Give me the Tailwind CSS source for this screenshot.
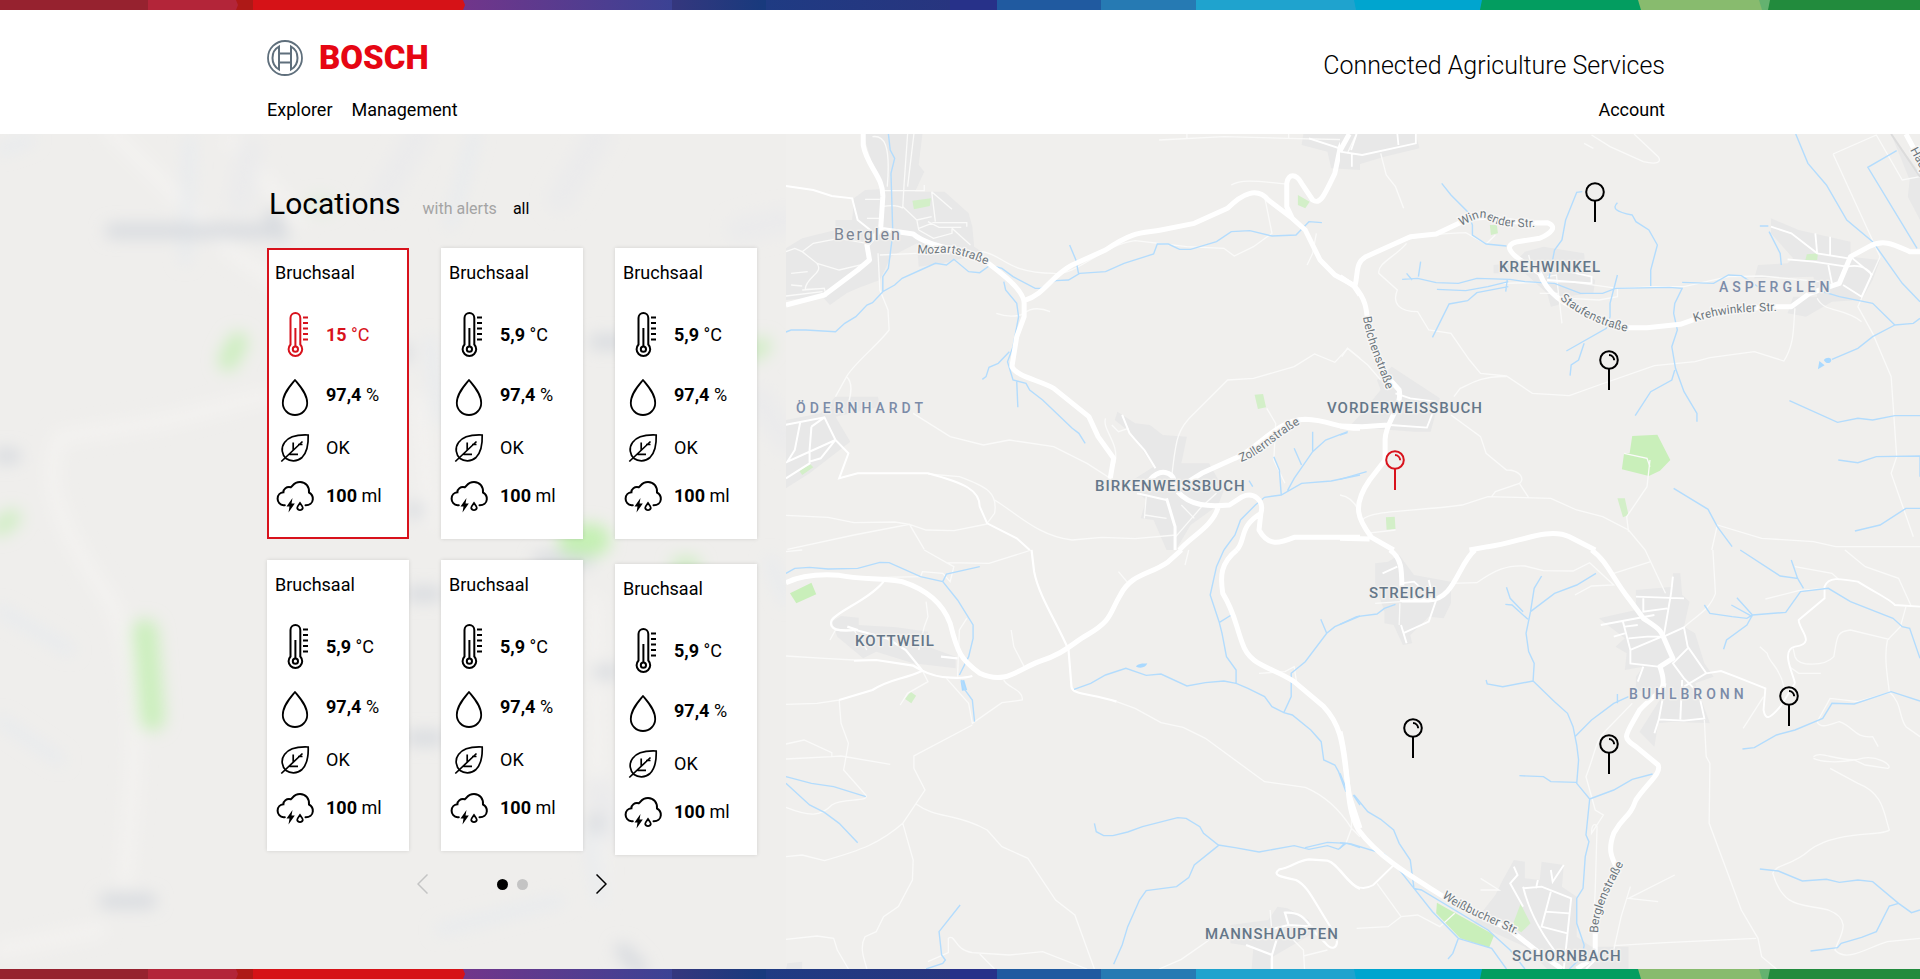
<!DOCTYPE html>
<html lang="en">
<head>
<meta charset="utf-8">
<meta name="viewport" content="width=device-width, initial-scale=1">
<title>Connected Agriculture Services</title>
<script src="https://cdn.jsdelivr.net/npm/@tailwindcss/browser@4"></script>
</head>
<body class="flex min-h-screen flex-col overflow-x-hidden bg-white font-['Roboto',sans-serif] text-black">

<!-- shared symbols -->
<svg class="absolute h-0 w-0" aria-hidden="true">
  <defs>
    <linearGradient id="violet"><stop offset="0" stop-color="#72358a"/><stop offset="1" stop-color="#3b4294"/></linearGradient>
    <linearGradient id="navy"><stop offset="0" stop-color="#35377e"/><stop offset="1" stop-color="#173a7d"/></linearGradient>
    <linearGradient id="indigo"><stop offset="0" stop-color="#1f3b83"/><stop offset="1" stop-color="#28357f"/></linearGradient>
    <symbol id="stripe" viewBox="0 0 1920 10" preserveAspectRatio="none">
      <rect width="150" height="10" fill="#96222f"/>
      <rect x="232" width="24" height="10" fill="#ae1917"/>
      <path d="M142 0H236L238 5L236 10H142Z" fill="#b32539"/>
      <rect width="148" height="10" fill="#96222f"/>
      <rect x="460" width="212" height="10" fill="url(#violet)"/>
      <path d="M253 0H463L465 5L463 10H253Z" fill="#d61217"/>
      <rect x="672" width="94" height="10" fill="url(#navy)"/>
      <rect x="766" width="186" height="10" fill="url(#indigo)"/>
      <rect x="950" width="48" height="10" fill="#273189"/>
      <rect x="997" width="105" height="10" fill="#205aa0"/>
      <rect x="1101" width="96" height="10" fill="#267ab3"/>
      <rect x="1196" width="160" height="10" fill="#1fa3ce"/>
      <path d="M1354 0H1484V10H1356Z" fill="#00a5cf"/>
      <path d="M1482 0H1642V10H1480Z" fill="#039d60"/>
      <path d="M1638 0H1764V10H1641Z" fill="#88bb6e"/>
      <path d="M1759 0H1772V10H1762Z" fill="#64b270"/>
      <path d="M1770 0H1920V10H1768Z" fill="#228b3d"/>
    </symbol>
    <symbol id="thermo" viewBox="0 0 40 46">
      <g fill="none" stroke="currentColor" stroke-width="2">
        <path d="M15.5 32.500V6a4.900 4.900 0 0 1 9.800 0V32.500a6.800 6.800 0 1 1-9.800 0Z"/>
        <path d="M20.400 16V34"/><circle cx="20.400" cy="37.200" r="2.600"/>
        <path d="M28 5.500h5M28 11h5M28 16.500h5M28 22h5M28 27.500h5"/>
      </g>
    </symbol>
    <symbol id="drop" viewBox="0 0 40 42">
      <path d="M20 6C15.500 11.500 7.800 19.500 7.800 29a12.200 12 0 0 0 24.400 0C32.200 19.500 24.500 11.500 20 6Z" fill="none" stroke="currentColor" stroke-width="1.800" stroke-linejoin="round"/>
    </symbol>
    <symbol id="leaf" viewBox="0 0 40 32">
      <g fill="none" stroke="currentColor" stroke-width="1.700">
        <path d="M33.200 3C33.500 12 32.500 20 27 25.500C22 30 15 29.500 11 26.500C7 22.500 5.500 16 9.500 10.500C14 4 22 2.500 33.200 3Z"/>
        <path d="M6.300 29.500L27.500 9.500M18.200 10.500V18M27.500 12.500H23M14.500 22.300H23"/>
      </g>
    </symbol>
    <symbol id="storm" viewBox="0 0 40 34" overflow="visible">
      <g fill="none" stroke="currentColor" stroke-width="2">
        <path d="M9.800 26.200H8.500C5 26 2.600 23 2.600 19.700C2.600 16 5.300 13.600 8.400 13.300C8.200 10 11.500 7.300 15.800 8.300C17.800 6.800 19 3 25 3C31 3 34.500 8 34 13.500C37 15 38 17.500 37.800 20.500C37.500 24 34.500 26.300 30.500 26.200" stroke-linecap="round"/>
        <path d="M25 24C23.500 26 22.200 27.500 22.200 29a2.900 2.800 0 0 0 5.600 0C27.800 27.500 26.500 26 25 24Z" stroke-width="1.800"/>
      </g>
      <path d="M17.500 19L11.500 27.500H14.500L13.500 33.500L19.800 24.500H16.500Z" fill="currentColor"/>
    </symbol>
    <symbol id="pin" viewBox="0 0 20 40"><g fill="none" stroke="currentColor" stroke-width="2"><circle cx="10" cy="10" r="8.800"/><path d="M10 19V40"/></g></symbol>
    <symbol id="pinShine" viewBox="0 0 20 40"><g fill="none" stroke="currentColor" stroke-width="2"><circle cx="10" cy="10" r="8.800"/><path d="M10 19V40M10 5a5.500 5.500 0 0 1 5.200 5.200"/></g></symbol>
  </defs>
</svg>

<svg class="h-[10px] w-full shrink-0" aria-hidden="true"><use href="#stripe"/></svg>

<header class="flex shrink-0 justify-between pt-[30px] pr-[255px] pb-3 pl-[267px]">
  <div>
    <a href="#" class="flex h-9 items-center gap-4" aria-label="Bosch">
      <svg class="size-9" viewBox="0 0 36 36" fill="none" stroke="#5f6f7c" aria-hidden="true">
        <circle cx="18" cy="18" r="17" stroke-width="1.800"/>
        <path d="M12 6.500C7.500 9 5.500 13 5.500 18S7.500 27 12 29.500ZM24 6.500C28.500 9 30.500 13 30.500 18S28.500 27 24 29.500ZM12 13.500H24M12 22.500H24" stroke-width="2"/>
      </svg>
      <span class="text-[33px] leading-9 font-black text-[#e60613]">BOSCH</span>
    </a>
    <nav class="mt-[22px] flex gap-[19px] text-lg leading-6">
      <a href="#">Explorer</a>
      <a href="#">Management</a>
    </nav>
  </div>
  <div class="flex flex-col items-end justify-end gap-4">
    <p class="text-[25px] leading-8 font-light">Connected Agriculture Services</p>
    <a href="#" class="text-lg leading-6">Account</a>
  </div>
</header>

<main class="relative flex-1 overflow-hidden bg-[#f0efed] px-[267px] pt-[52px]">

  <!-- map canvas -->
  <svg class="absolute inset-0 h-full w-full [&_path]:[vector-effect:non-scaling-stroke]" viewBox="0 134 1920 835" preserveAspectRatio="xMinYMin slice" role="img" aria-label="Map">
    <defs>
      <path id="st1" d="M917 253C930 255 938 252 948 253S968 257 990 266"/>
      <path id="st2" d="M1241 462C1262 455 1274 438 1302 423"/>
      <path id="st3" d="M1363 317C1366 340 1376 360 1388 394"/>
      <path id="st4" d="M1461 226C1472 221 1480 215 1487 219S1497 228 1540 227"/>
      <path id="st5" d="M1560 299C1572 310 1595 326 1634 333"/>
      <path id="st6" d="M1695 322C1712 316 1730 311 1785 311"/>
      <path id="st7" d="M1442 897C1456 909 1480 918 1522 937"/>
      <path id="st8" d="M1598 933C1598 912 1609 890 1627 858"/>
      <path id="st9" d="M1910 150L1935 195"/>
      <filter id="soft" x="-10%" y="-10%" width="120%" height="120%"><feGaussianBlur stdDeviation="8"/></filter>
      <clipPath id="panel"><rect y="134" width="786" height="845"/></clipPath>
    </defs>

    <!-- north-west tile -->
    <g transform="translate(780 130) scale(.3699 .33333)">
      <g fill="#e8e8e8">
        <path d="M225 12H385L375 105L390 125L365 185L445 185L510 250L520 290L525 350L550 370L440 400L375 410L370 340L300 380L270 450L210 475L180 490L135 525L115 500L16 510V355L60 325L150 300V270L195 270L200 205L230 180L270 178Z"/>
        <path d="M150 800L265 800L270 830L150 860L190 935L80 1030L16 1075V870L110 850Z"/>
        <path d="M912 845L960 880L1000 885L1035 915L1100 920L1085 1000L1160 1000L1200 1080L1185 1125L1110 1185L1070 1260H1045L1010 1170L975 1165L990 1110L940 1060L1010 1010L950 910L905 870Z"/>
        <path d="M1415 12L1568 12V120L1490 115L1480 65L1410 45Z"/>
      </g>
      <g fill="#d3efc8">
        <path d="M358 212L408 205L405 228L362 238Z"/><path d="M1400 195L1432 215L1420 235L1400 225Z"/><path d="M1283 794L1306 792L1314 832L1292 837Z"/><path d="M52 1022L82 1003L90 1012L60 1035Z"/>
      </g>
      <g fill="none" stroke="#fafaf9" stroke-width="1.300">
        <path d="M250 20C280 15 300 40 290 170M345 12L335 170L332 230L370 270L375 300M362 12L345 170M280 182H390V165M230 208H270M235 265H270M370 270L410 260M410 185L420 275M410 185L465 238M375 295L415 278H505V290M400 275L430 292H490M465 295V310L415 325L375 300M465 295L500 330L515 345M16 365L40 355L60 365L100 400C120 430 70 440 68 478L120 475M60 365L90 340L160 325L235 340M100 400L160 420L235 400M30 430L75 425M30 465L60 468M16 498L115 485M60 480L120 475L125 500M275 230C300 225 320 225 332 235M265 370L270 480L292 540L295 600C260 650 200 700 180 740L150 800M180 740C200 760 190 800 185 820M270 375L370 370M545 365C600 370 610 430 740 430M585 550C610 560 640 562 660 550C680 530 710 535 730 545M740 430C800 440 870 345 960 332L1100 350L1200 355L1228 378L1280 350L1330 310L1310 200M1220 165C1250 145 1300 155 1370 162M1025 30L1200 20L1370 25L1568 30M1450 310L1440 370L1425 405M360 850L460 920L550 945L620 930L740 950L830 1000L900 1050M880 865C870 900 920 940 905 1000M1060 1030C1070 940 1070 900 1120 850L1210 750L1280 745L1390 710L1445 672L1500 697L1535 655L1568 685M1316 835L1340 880L1335 990L1365 1060M400 1032L485 1040C560 1070 590 1090 580 1150L560 1180M580 1110C640 1150 700 1220 790 1230L870 1222L960 1226L1070 1215M16 1156L130 1162L200 1178L310 1176L350 1183L395 1200L470 1202L560 1182M20 1258L200 1215L350 1183L390 1258M897 885L915 905L942 895M990 1100L985 1165M985 1155L1045 1165M1085 1125L1120 1165M1180 1090L1140 1130L1070 1220M1100 12V25M1375 12V28"/>
      </g>
      <g fill="none" stroke="#fff" stroke-width="2">
        <path d="M16 168L90 180L140 198L195 205L210 270L250 305M16 884L120 862L150 930L185 970L160 1045L210 1030H400C500 1060 540 1080 540 1130L560 1180L640 1225L675 1260M55 875L40 960L20 995L150 930M85 890L80 960V1000L16 1045M85 890L120 862M80 995L110 985L150 930M925 855L945 910L985 960L1015 1015M965 1090L1045 1110M1430 25L1568 75"/>
      </g>
      <g fill="none" stroke="#b3dcfd" stroke-width="1.400">
        <path d="M293 12L298 60L310 85L300 130L305 310L297 380L293 415L278 440V485L310 465L330 445L380 420L420 400L450 405L470 388L510 425L540 428L565 408M278 485L250 518L235 525L205 560L175 580L150 605L70 600H30L16 606M565 405L600 415L630 440L690 475L705 475L745 452L780 450L810 430L880 425L930 400L1010 372L1020 342L1050 342L1080 358L1110 358L1180 335L1220 305L1270 302L1330 318L1395 315L1430 275L1465 278M783 345L800 390L807 430M605 455L610 480L640 520L645 560L630 650L615 695L630 750L665 760L675 780L710 810L790 895L808 910L825 940M620 665L590 700L565 712L557 740L547 748M640 755L643 832M1568 1035L1490 1053L1410 1060L1355 1095L1310 1102L1285 1125L1245 1170L1230 1215L1200 1260M1355 1093L1350 1020L1335 980M1372 1082L1390 1045L1440 965L1475 930L1535 905M1440 965V905M1410 1005L1390 955M1268 1052L1278 1070"/>
      </g>
      <g fill="none" stroke="#fff" stroke-width="5" stroke-linejoin="round">
        <path d="M225 12V45C235 110 280 140 278 200L272 298L360 312C400 350 480 355 540 380C600 430 660 480 660 520V560L640 620L627 710C640 740 700 750 740 775L835 860L860 920L902 985L892 1050M272 298L235 345L242 390L210 420L120 495L16 525M660 512C720 490 730 440 790 405L880 360C960 300 980 310 1030 300L1120 280L1210 235C1250 190 1290 170 1320 210L1385 265L1420 300L1460 390L1500 435L1550 465L1568 495M1385 265L1370 230V160C1375 130 1395 130 1410 160L1440 210C1460 225 1470 200 1500 130L1515 50L1530 12M892 1050L960 1080L1000 1050C1030 1010 1060 1030 1065 1050L1075 1075L1140 1030L1230 985C1290 960 1340 870 1420 868C1480 870 1500 890 1550 895H1568M1075 1085C1110 1130 1160 1130 1215 1125L1250 1100C1280 1085 1310 1110 1300 1150L1295 1200C1320 1250 1350 1240 1390 1222H1568M1185 1130C1170 1190 1110 1220 1080 1260M1300 1150C1240 1190 1260 1230 1235 1260" />
        <path d="M1045 1105L1068 1190V1260" stroke-width="3"/>
      </g>
    </g>

    <!-- north-east tile -->
    <g transform="translate(1340 130) scale(.3699 .33333)">
      <g fill="#e8e8e8">
        <path d="M0 12H205L215 55L120 80L30 110H0Z"/>
        <path d="M500 365L550 350L660 370L665 430L690 450L685 490L600 500L590 525L570 530L560 490L500 430L415 430V405L470 400Z"/>
        <path d="M1165 265L1240 300L1380 335V380L1460 390L1440 450L1410 510L1330 515L1260 560L1210 550L1225 500H1290L1280 440L1120 445L1130 405L1210 400L1225 385L1165 310Z"/>
        <path d="M140 710L270 805L245 905H200L25 890L50 860L110 780L100 750Z"/>
        <path d="M1490 12L1568 130V270L1535 200L1540 150Z"/>
      </g>
      <path d="M790 918L858 914L893 990L865 1022L835 1038L762 1018L768 970L783 970Z" fill="#c9efba"/>
      <g fill="#d3efc8"><path d="M750 1105H770L780 1155L765 1162Z"/><path d="M124 1162L148 1160L150 1197L126 1199Z"/><path d="M405 285H424L427 310L408 315Z"/><path d="M1262 373L1292 370L1290 390L1258 390Z"/></g>
      <path d="M1296 693L1310 706L1292 718ZM1308 690C1315 680 1330 682 1328 692S1312 702 1308 690Z" fill="#a9d9ff"/>
      <g fill="none" stroke="#fafaf9" stroke-width="1.300">
        <path d="M768 970L830 985L838 1010"/>
        <path d="M110 70L125 135L150 170L172 235M680 15L730 50L820 95C860 105 870 95 860 80L795 12M660 40L685 55M180 340C150 380 100 400 105 430L155 480C140 520 160 545 210 545L240 600L300 610L350 690L380 730L450 738L520 790L620 797L700 765L850 707L960 695L1000 683L1120 665L1200 693C1230 640 1225 590 1230 535M180 330C240 310 310 310 340 308L395 342L420 315M450 740C380 735 340 770 325 775L308 800M300 855L380 920L395 970L450 1020C490 1020 500 1050 485 1060L420 1085L410 1100M485 1060L510 1103M60 1170C80 1140 200 1145 330 1125L400 1100L570 1105L640 1140L710 1160L780 1200L825 1260M780 1205L775 1160L830 1070L838 990M70 1210L150 1200M1005 1260L1020 1185L1140 1225L1280 1235L1340 1250L1568 1250M560 440L585 435L600 580M440 460L620 455L750 475L850 470H930L1050 440L1140 438L1300 455M750 475V500L700 510L620 505M510 375L520 420M1333 72L1450 15L1520 150L1568 140M1333 72L1460 380L1400 530L1440 610L1490 740L1505 980L1490 1030L1550 1220M1290 505C1310 550 1360 530 1410 575M5 680L20 655L75 705L110 750M45 10L20 70M0 1095C30 1100 50 1130 60 1170M540 490H590"/>
      </g>
      <g fill="none" stroke="#fff" stroke-width="1.800">
        <path d="M0 65L60 75L205 40V12M155 12L158 45M30 60L45 12M32 110V70M1165 290L1220 310L1290 370L1375 385M1285 310L1290 370M1325 320V375M1210 388L1280 395L1370 410M1320 405L1330 460M1370 410C1420 400 1440 430 1435 440L1410 500L1360 465M1380 380L1440 435M135 885L235 893L250 850M150 790L190 805L260 815M560 450L680 460V440L600 420"/>
      </g>
      <g fill="none" stroke="#b3dcfd" stroke-width="1.400">
        <path d="M1232 12L1265 100L1315 165L1370 270L1440 335L1520 460L1568 515M1505 62L1427 112L1560 355M275 160L300 195L345 245L358 285V315L395 342L450 348M655 185L640 187L610 270L600 330L580 360L565 445M750 218C735 235 745 245 790 255L800 275L835 300L858 345L840 420V468M168 448L210 445L260 458L320 460L370 445L460 448L500 455L580 460L650 490L710 490L745 475L890 472L925 475L905 520L902 550L912 600L897 650L907 715L930 785L965 850V875M905 720L897 750L840 785L798 857M180 430L195 450M218 395L212 440M262 478L340 482L400 470L455 455M448 485L452 450M455 470L370 488L345 512L295 522L250 622M750 435L730 520V560L720 595L612 663M660 640L645 690L625 705L622 737M925 457L1010 460L1050 435L1085 437L1130 470M1160 305L1190 370L1193 405M1135 288L1158 288M1290 480L1350 500L1440 520L1500 585L1550 580L1568 565M1500 585L1440 620L1400 655L1330 688M1215 812L1345 877L1400 865L1440 870L1500 857H1568M1347 990L1400 998L1450 980L1568 978V1040M902 1075L995 1138L1020 1190L1060 1250M1392 1203L1460 1185L1530 1135H1568M0 915L20 908M0 1048L72 1025"/>
      </g>
      <path d="M1490 12L1568 140" fill="none" stroke="#dcdcdc" stroke-width="2"/>
      <path d="M1530 12L1568 90M0 62L25 12" fill="none" stroke="#fff" stroke-width="5"/>
      <g fill="none" stroke="#fff" stroke-width="5" stroke-linejoin="round">
        <path d="M0 440L40 470C80 520 70 560 80 620L120 730L160 780C170 830 120 880 122 930V990L80 1050C30 1130 50 1170 85 1222L145 1260M40 470C50 430 40 400 70 380L190 320L260 312L350 265L400 262L500 280L560 278C590 290 570 310 540 325L480 335C440 345 460 370 500 400L540 430C560 490 600 520 680 560L770 593H830L920 583L1010 548L1150 530H1220L1270 490L1350 460L1380 380L1430 350C1470 325 1500 345 1540 365H1568M0 888L60 890L130 885M0 1225L80 1227M350 1260L400 1250C480 1240 560 1190 620 1220L690 1260"/>
      </g>
    </g>

    <!-- south-west tile -->
    <g transform="translate(780 550) scale(.3699 .33333)">
      <g fill="#e8e8e8">
        <path d="M165 198L213 203V225L315 232L400 245V290L475 320V355L360 340L260 305L225 325L155 260L140 215Z"/>
        <path d="M1218 1125L1320 1110L1345 1070L1372 1075L1430 1110L1440 1150L1395 1180L1325 1225V1257H1275L1280 1190L1218 1180Z"/>
        <path d="M20 1240L60 1235V1257H16Z"/>
      </g>
      <path d="M27 130L85 98L98 133L44 160Z" fill="#c9efba"/><path d="M353 425L368 437L355 460L338 447Z" fill="#d3efc8"/>
      <path d="M488 392L498 390L506 420L492 422ZM963 348C975 338 985 342 993 340C990 352 975 357 963 350Z" fill="#a9d9ff"/>
      <g fill="none" stroke="#fafaf9" stroke-width="1.300">
        <path d="M390 0L450 38L565 40L680 0M450 38L470 50L460 95L440 70L385 65L380 80L280 82M395 155L400 200L390 230L375 300M505 205L485 240L480 380M625 240L632 290L660 350M915 65L940 98M1105 0L1095 45M16 318L120 325L200 330M325 465L345 430L400 395L385 362M450 385L510 460L520 520L600 458L655 450C660 420 610 410 605 390M520 525L362 618V655L392 720L332 820C270 880 220 900 120 932L60 915L16 920M332 820L360 930L358 990L320 1070L280 1100L260 1145L230 1160C215 1190 225 1220 235 1257M368 762C420 805 480 790 560 840L600 890L670 925L745 1050L797 1095L850 1257M16 463L100 460L160 450L165 520L185 580L172 660L232 735C240 760 170 740 140 765C110 800 80 800 16 772M16 582L65 570L140 608V620L16 627M140 620L165 618L298 643M16 1168L100 1158L145 1165L155 1200L185 1257M400 1235L455 1208V1165C475 1150 470 1200 520 1208L620 1215L710 1205L830 1257M540 1212L580 1257M910 455L960 475L1030 518L1090 532L1150 565L1310 695L1420 712C1480 740 1520 790 1545 835L1568 860M1545 790V835L1530 880M1295 370L1365 365L1390 350L1397 400M1025 1257L1085 1228L1160 1170M1415 1218L1480 1200M1418 1257L1415 1200L1370 1150M1325 1080L1330 1150M16 5L60 0M135 270L150 240L200 240L235 300"/>
      </g>
      <g fill="none" stroke="#fff" stroke-width="2.200">
        <path d="M280 95C240 150 160 180 140 210C130 240 160 245 205 240L290 265L340 300L385 362L360 347L260 330L200 332M385 362C430 390 500 385 520 378M385 362C330 390 300 385 250 420L160 450M435 320L480 325M182 230L210 240M680 0L687 65C700 140 750 220 780 300L788 410C790 435 840 430 910 455M1568 1017C1530 1000 1510 940 1480 932L1430 928C1400 930 1380 955 1350 958C1330 975 1350 980 1395 990C1430 1010 1440 1050 1505 1160C1510 1200 1490 1200 1475 1180L1440 1140C1420 1100 1400 1085 1365 1088L1375 1125L1440 1130M1320 1140L1375 1125M1260 1185L1330 1215V1257M1330 1215L1345 1160"/>
      </g>
      <g fill="none" stroke="#b3dcfd" stroke-width="1.400">
        <path d="M16 70L40 55L80 52L130 57L210 55L270 37L295 38L380 80L440 95L480 150L522 225V265L510 320L485 375M440 95L450 72L540 50M490 390L500 420L520 450L526 515M16 680L85 700L145 710L232 740M16 700L80 765L120 787L160 820L210 878M487 1065L430 1145L437 1215L447 1230L440 1240L395 1257M1200 0L1180 50L1163 135L1187 215L1195 250L1207 320L1233 360V400L1265 415L1310 440L1330 470L1362 488L1385 495L1435 540L1463 575L1470 630L1500 645L1510 665L1530 725M1187 218L1220 195M1233 400L1200 393L1150 398L1100 408L1030 372L990 376L935 355L880 375L840 400L795 418M1362 488L1382 440V370L1420 335L1478 250L1500 230L1568 198M1478 250L1462 208M850 820L855 845L875 857H900L940 846L980 830L1075 803L1098 805L1135 830L1145 850L1185 885L1230 893L1295 906L1390 887L1430 898L1480 887L1510 898L1530 880L1480 877L1420 893M1185 887L1120 945L1105 983L1072 1010L990 1022L972 1050L940 1130L925 1185L902 1243M1535 880L1568 893M1550 735L1568 765"/>
      </g>
      <g fill="none" stroke="#fff" stroke-width="5">
        <path d="M16 98C60 75 110 72 160 76C220 90 280 82 330 95C400 120 440 160 460 220C480 310 490 330 540 370C610 405 640 360 700 335C770 310 790 280 830 255C900 210 890 190 920 135C950 70 1000 75 1050 35L1085 0M1235 0C1190 40 1190 80 1197 130C1230 190 1230 220 1250 280C1270 350 1330 350 1390 395L1470 470C1530 540 1520 620 1540 740L1568 835"/>
      </g>
    </g>

    <!-- south-east tile -->
    <g transform="translate(1340 550) scale(.3699 .33333)">
      <g fill="#e8e8e8">
        <path d="M130 35L160 15L200 75L300 95L300 160L280 205L240 200L190 255L195 280L170 285L145 225L120 220V185L95 100V40Z"/>
        <path d="M800 120L900 110V70H920L925 135L945 155L930 230L960 250L985 340L1010 380L960 400L1000 520L900 515L860 520L850 590L810 545L870 440L800 420V380L820 350L770 360L775 310L745 290L770 265L700 205L800 180Z"/>
        <path d="M470 930L500 935V985L540 990L545 935L605 945L600 1010L640 1040V1160L680 1190L780 1190V1257H560L500 1190L360 1120L420 1035L440 990Z"/>
      </g>
      <path d="M262 1058L417 1155L403 1193L325 1165L260 1090Z" fill="#c9efba"/><path d="M488 1062L515 1120L490 1147L465 1130Z" fill="#d3efc8"/>
      <g fill="none" stroke="#fafaf9" stroke-width="1.300">
        <path d="M300 100L370 98C420 60 450 45 500 48L550 62L630 63L675 38L740 105L680 108L635 135M740 70L840 35M825 0L880 130M1008 0L1015 130C1000 180 960 200 930 232M1150 147L1240 122L1310 115M1230 50L1330 70L1350 90M1365 0L1420 50L1510 85L1545 170M1530 170L1515 230L1480 270C1470 320 1480 380 1485 425C1520 460 1510 500 1530 530L1568 560M1485 268L1380 240C1340 245 1345 260 1335 320C1310 350 1240 350 1230 320L1225 295M1215 350L1240 370H1300M1485 428L1400 455L1325 445L1290 515C1300 540 1330 520 1350 515C1390 530 1390 565 1440 560L1455 590M1200 410C1190 350 1160 340 1155 310L1135 290M1145 440L1090 535M985 510L990 620L1000 640L998 820L1045 960L1085 1080L1130 1165L1140 1220L1180 1257M740 1187L880 1178L1125 1165M1280 620C1300 600 1340 635 1400 628C1450 610 1500 650 1480 655L1420 645L1390 630C1340 640 1300 635 1280 625M1325 655L1400 700C1470 730 1470 790 1485 840C1470 860 1340 840 1270 900C1220 950 1180 940 1170 970C1200 1080 1250 1060 1320 1080C1390 1110 1350 1160 1338 1200C1370 1240 1430 1190 1480 1175L1568 1165M790 460L720 540C690 570 690 610 665 680L690 780L712 795L680 850C680 820 690 820 695 830L690 1020L685 1140M785 1010L760 1100L740 1200M905 975L780 1045L860 1055M100 1000L165 1100L210 1095L270 1130L310 1090M45 1135L130 1130L165 1100M380 985L430 1020L380 1020M95 160L165 155M160 225L162 160"/>
      </g>
      <g fill="none" stroke="#fff" stroke-width="1.900">
        <path d="M115 70L155 50M165 100L200 95L235 130M240 90L250 140M170 250L240 215L260 150M180 280L165 225M0 960C30 1000 50 1030 90 1005L150 940M705 225L850 195M765 215L785 300V340L860 350M770 230L805 225M780 265L830 260L870 260L785 300M820 145V185L885 175M800 140L930 145M900 80L895 130L875 260L930 232L940 290L990 370L930 410M940 295L900 340L930 385L970 430L985 505L930 512L862 508L880 400M925 390L920 508M862 508L850 550M740 260L770 250M990 370L1030 363L1070 380L1150 415L1145 480C1150 510 1160 510 1190 470L1230 400M1230 400C1225 370 1190 300 1230 290C1290 280 1240 240 1240 210L1310 145V110C1320 80 1350 85 1400 95C1450 130 1490 150 1500 165L1568 170M495 1015L545 1010L625 1045L605 1257M495 1010C510 1080 540 1150 600 1230M570 1025L545 1130L615 1150M555 1085L620 1090M470 950L480 975L460 1000L495 1070M605 945L575 995L570 960M535 990L530 1015M820 350L805 395M665 1257L690 1230"/>
      </g>
      <g fill="none" stroke="#b3dcfd" stroke-width="1.400">
        <path d="M0 223L45 200L100 192L120 175L150 163M545 78L525 115L515 185L503 250L510 305L525 340L522 393L580 455L615 490L630 530L640 585L645 630L640 700L675 747L665 855L673 875L663 920L657 1015L640 1045V1120L660 1185L655 1220L620 1257M515 185L580 130L640 105L692 70M450 112L460 145L495 185M447 163L465 165L508 208M522 393L440 410L398 402L395 390M635 560L680 510L740 460L780 440M750 460V432M675 747L740 720L790 688L845 672M485 677L550 680L570 695L640 697M0 670L20 725M38 735L75 785L110 808L145 840L160 880L190 930L200 1015L220 1020L400 1140L460 1200L500 1257M0 878L30 882L120 912L150 945L200 1015L250 1085L320 1165L410 1195L450 1257M320 1165L305 1210L292 1227M0 895L12 880M1082 0L1190 78L1237 85L1220 30M1237 85L1253 115M985 165L1000 190L1060 200L1100 205L1115 195L1205 187L1245 125L1320 115L1380 155L1495 205L1520 230L1540 235L1568 325M1115 195L1073 143M1115 200L1058 165M1115 195L1100 225L1045 270L1037 298M1088 597L1120 593L1180 555L1230 540L1305 505L1330 460L1390 462L1490 425L1568 453M1135 957L1185 963L1250 993L1315 988L1350 997L1400 990L1440 995L1510 1060L1545 1088L1568 1080M1510 1060L1485 1068L1450 1145L1410 1162L1355 1180L1345 1193L1272 1203"/>
      </g>
      <g fill="none" stroke="#fff" stroke-width="5" stroke-linejoin="round">
        <path d="M135 0C175 30 165 80 168 150H240C310 150 320 40 365 0M680 0C720 30 740 90 780 145L820 205C880 250 860 230 900 325L865 350C890 430 860 420 810 480C770 560 760 560 800 590L860 645C870 670 830 700 800 750C780 810 770 790 740 850C720 910 740 930 755 970M690 1140V1220L640 1257M0 545C30 680 10 760 50 840C110 930 210 990 280 1040L460 1140L540 1210L600 1257"/>
      </g>
    </g>

    <!-- labels -->
    <g fill="#657789" stroke="#f0efed" stroke-width="3" stroke-linejoin="round" class="text-[15px] font-medium tracking-[1px] [paint-order:stroke]">
      <text x="834" y="240" class="text-[16px] font-normal tracking-[2px]" fill="#7b8594">Berglen</text>
      <text x="1095" y="491">BIRKENWEISSBUCH</text>
      <text x="1327" y="413">VORDERWEISSBUCH</text>
      <text x="1499" y="272">KREHWINKEL</text>
      <text x="855" y="646">KOTTWEIL</text>
      <text x="1205" y="939">MANNSHAUPTEN</text>
      <text x="1369" y="598">STREICH</text>
      <text x="1512" y="961">SCHORNBACH</text>
      <g fill="#7b8ba8" class="text-[14px] tracking-[4px]">
        <text x="796" y="413">ÖDERNHARDT</text>
        <text x="1719" y="292">ASPERGLEN</text>
        <text x="1629" y="699">BUHLBRONN</text>
      </g>
    </g>
    <g fill="#6c757c" stroke="#f6f5f4" stroke-width="3" stroke-linejoin="round" class="text-[12px] [paint-order:stroke]">
      <text><textPath href="#st1">Mozartstraße</textPath></text>
      <text><textPath href="#st2">Zollernstraße</textPath></text>
      <text><textPath href="#st3">Belchenstraße</textPath></text>
      <text><textPath href="#st4">Winnender Str.</textPath></text>
      <text><textPath href="#st5">Staufenstraße</textPath></text>
      <text><textPath href="#st6">Krehwinkler Str.</textPath></text>
      <text><textPath href="#st7">Weißbucher Str.</textPath></text>
      <text><textPath href="#st8">Berglenstraße</textPath></text>
      <text><textPath href="#st9">Haup</textPath></text>
    </g>

    <!-- frosted part under the panel -->
    <g clip-path="url(#panel)">
      <rect y="134" width="786" height="845" fill="#efeeec"/>
      <g filter="url(#soft)" fill="none" stroke-linecap="round">
        <path d="M60 437L160 422L270 395M60 437C40 480 60 530 110 600C150 680 130 800 125 880M110 130L230 250L300 300M230 140L300 220M420 400L430 520M595 600L600 900M0 950L100 930" stroke="#f4f3f1" stroke-width="12"/>
        <path d="M475 134L450 225M430 340L440 420M0 610L70 650M0 720L60 760M590 830L600 900M440 930L560 900M770 560L786 600M0 150L30 140M190 140L185 260" stroke="#e6eaee" stroke-width="9"/>
        <path d="M420 134L380 200M600 134L560 200M250 150L240 200M760 400L786 440M600 790L610 830M740 230L786 220" stroke="#ebebec" stroke-width="26"/>
        <path d="M112 231H275M0 456H14M106 901H150M412 510H418M412 594H436M412 738H438M596 342H620M540 560H586M600 672H612M622 950L640 968M596 820V826M404 350V356M272 215L282 235" stroke="#d7dadf" stroke-width="14"/>
        <path d="M228 361L238 342" stroke="#cdeec0" stroke-width="20"/>
        <path d="M145 632L152 718" stroke="#ccefbe" stroke-width="26"/>
        <path d="M0 527L12 518M752 352L762 346M680 566H692" stroke="#d0eec4" stroke-width="18"/>
        <path d="M574 540H594" stroke="#c5f0b4" stroke-width="32"/>
        <path d="M315 205H325M530 660V664" stroke="#e0eedb" stroke-width="16"/>
      </g>
    </g>
  </svg>

  <!-- pins -->
  <div>
    <button class="absolute top-[48px] left-[1585px]" aria-label="Location 1"><svg class="h-10 w-5"><use href="#pin"/></svg></button>
    <button class="absolute top-[216px] left-[1599px]" aria-label="Location 2"><svg class="h-10 w-5"><use href="#pinShine"/></svg></button>
    <button class="absolute top-[316px] left-[1385px] text-[#d8121c]" aria-label="Location 3, alert"><svg class="h-10 w-5"><use href="#pinShine"/></svg></button>
    <button class="absolute top-[584px] left-[1403px]" aria-label="Location 4"><svg class="h-10 w-5"><use href="#pinShine"/></svg></button>
    <button class="absolute top-[600px] left-[1599px]" aria-label="Location 5"><svg class="h-10 w-5"><use href="#pinShine"/></svg></button>
    <button class="absolute top-[552px] left-[1779px]" aria-label="Location 6"><svg class="h-10 w-5"><use href="#pinShine"/></svg></button>
  </div>

  <section class="relative w-[490px]">
    <div class="flex items-baseline">
      <h1 class="pl-0.5 text-[30px] leading-9">Locations</h1>
      <button class="ml-[22px] text-base text-[#a4a4a4]">with alerts</button>
      <button class="ml-4 text-base">all</button>
    </div>

    <div id="cards" class="mt-[26px] flex items-start gap-8"></div>

    <div class="mx-auto mt-[17px] flex h-6 w-[190px] items-center justify-between">
      <button aria-label="Previous page" class="text-[#c4c4c4]" disabled><svg class="h-5 w-[11px]" viewBox="0 0 11 20" fill="none" stroke="currentColor" stroke-width="1.500"><path d="M10.500 .5L1 10L10.500 19.500"/></svg></button>
      <div class="flex gap-[9px]">
        <button aria-label="Page 1" class="size-[11px] rounded-full bg-black"></button>
        <button aria-label="Page 2" class="size-[11px] rounded-full bg-[#c4c4c4]"></button>
      </div>
      <button aria-label="Next page"><svg class="h-5 w-[11px]" viewBox="0 0 11 20" fill="none" stroke="currentColor" stroke-width="1.500"><path d="M.5 .5L10 10L.5 19.500"/></svg></button>
    </div>
  </section>
</main>

<svg class="h-[10px] w-full shrink-0" aria-hidden="true"><use href="#stripe"/></svg>

<script>
  const card = (temp, alert) => `
    <article class="w-[142px] border-2 bg-white px-1.5 pt-[11px] pb-[25px] text-lg leading-6 ${alert ? 'border-[#d8121c]' : 'border-white shadow-[0_0_4px_rgba(0,0,0,0.12)]'}">
      <h2>Bruchsaal</h2>
      <ul class="mt-[27px] flex flex-col gap-4">
        <li class="flex items-center gap-[11px] ${alert ? 'text-[#d8121c]' : ''}"><svg class="h-[46px] w-10"><use href="#thermo"/></svg><span><b>${temp}</b> °C</span></li>
        <li class="flex items-center gap-[11px]"><svg class="h-[42px] w-10"><use href="#drop"/></svg><span><b>97,4</b> %</span></li>
        <li class="flex items-center gap-[11px]"><svg class="h-8 w-10"><use href="#leaf"/></svg><span>OK</span></li>
        <li class="flex h-8 items-center gap-[11px]"><svg class="h-[34px] w-10"><use href="#storm"/></svg><span><b>100</b> ml</span></li>
      </ul>
    </article>`;
  const columns = [
    { gap: 'gap-[21px]', cards: [['15', true], ['5,9', false]] },
    { gap: 'gap-[21px]', cards: [['5,9', false], ['5,9', false]] },
    { gap: 'gap-[25px]', cards: [['5,9', false], ['5,9', false]] },
  ];
  document.getElementById('cards').innerHTML = columns
    .map(c => `<div class="flex flex-col ${c.gap}">${c.cards.map(a => card(...a)).join('')}</div>`)
    .join('');
</script>
</body>
</html>
